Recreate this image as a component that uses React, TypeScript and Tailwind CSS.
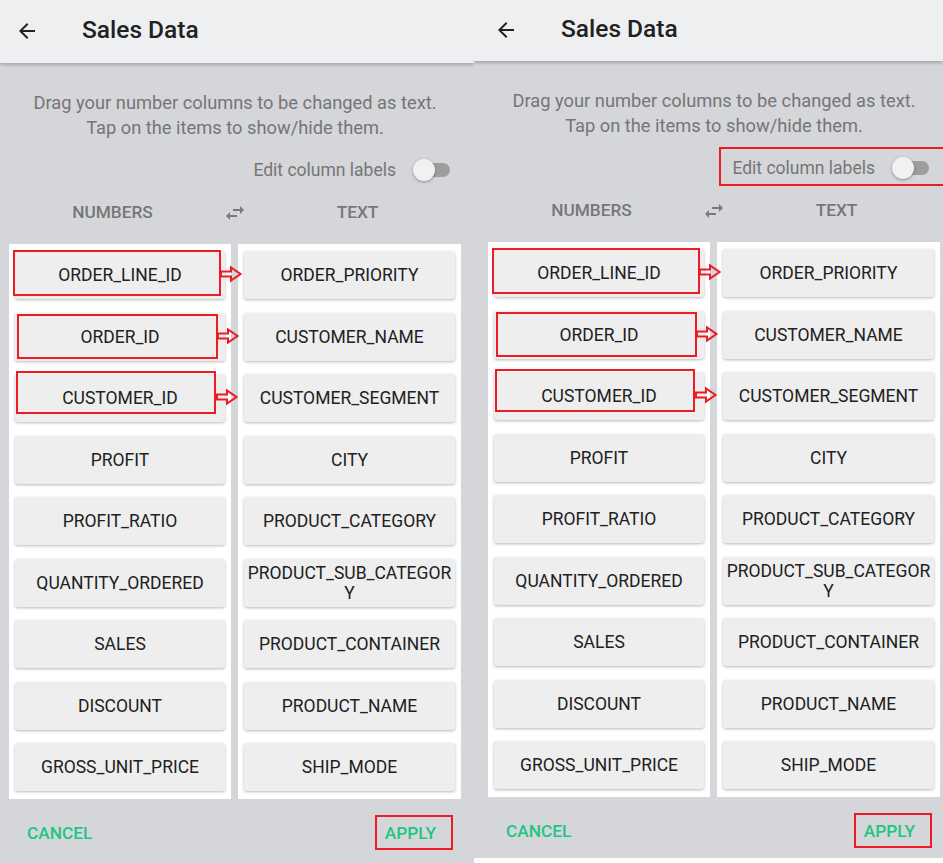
import React from 'react';

const numberCols = [
  'ORDER_LINE_ID',
  'ORDER_ID',
  'CUSTOMER_ID',
  'PROFIT',
  'PROFIT_RATIO',
  'QUANTITY_ORDERED',
  'SALES',
  'DISCOUNT',
  'GROSS_UNIT_PRICE',
];

const textCols = [
  'ORDER_PRIORITY',
  'CUSTOMER_NAME',
  'CUSTOMER_SEGMENT',
  'CITY',
  'PRODUCT_CATEGORY',
  'PRODUCT_SUB_CATEGORY',
  'PRODUCT_CONTAINER',
  'PRODUCT_NAME',
  'SHIP_MODE',
];

function BackArrow() {
  return (
    <svg width="24" height="24" viewBox="0 0 24 24" className="fill-[#212121]">
      <path d="M20 11H7.83l5.59-5.59L12 4l-8 8 8 8 1.41-1.41L7.83 13H20v-2z" />
    </svg>
  );
}

function SwapIcon() {
  return (
    <svg width="24" height="24" viewBox="0 0 24 24" className="fill-[#7a7a7a]">
      <path d="M6.99 11L3 15l3.99 4v-3H14v-2H6.99v-3zM21 9l-3.99-4v3H10v2h7.01v3L21 9z" />
    </svg>
  );
}

// hollow red arrow used for the annotations
function RedArrow() {
  return (
    <svg width="22" height="16" viewBox="0 0 22 16" className="overflow-visible">
      <path
        d="M1 5.5 H11 V1.5 L20.5 8 L11 14.5 V10.5 H1 Z"
        fill="none"
        stroke="#ec1c24"
        strokeWidth="2"
      />
    </svg>
  );
}

function ColButton({ label }: { label: string }) {
  return (
    <div className="h-[48px] flex items-center justify-center rounded-[3px] bg-[#eeeeee] px-[3px] text-center text-[17.5px] leading-[20px] text-[#212121] break-all shadow-[0_1px_3px_rgba(0,0,0,0.28)]">
      {label}
    </div>
  );
}

function Screen({ right }: { right?: boolean }) {
  return (
    <div className="flex flex-col h-full">
      <div
        className={`${right ? 'h-[61px] pl-[5px]' : 'h-[63px]'} shrink-0 bg-[#eeeff1] shadow-[0_2px_3px_rgba(0,0,0,0.22)] relative z-10`}
      >
        <div className="flex items-center h-full pb-[2px]">
          <div className="w-[54px] flex justify-center">
            <BackArrow />
          </div>
          <div className="ml-[28px] text-[24.5px] font-medium text-[#212121]">Sales Data</div>
        </div>
      </div>

      <div className={`flex-1 bg-[#d5d6da] ${right ? 'pl-[5px]' : ''}`}>
        <div className="relative w-[470px]">
          <div className="pt-[27px] text-center text-[18.3px] leading-[25px] text-[#757575]">
            <div>Drag your number columns to be changed as text.</div>
            <div>Tap on the items to show/hide them.</div>
          </div>

          <div className="mt-[16px] h-[28px] flex items-center justify-end pr-[20px]">
            <span className="text-[17.5px] text-[#757575]">Edit column labels</span>
            <div className="relative ml-[14px] w-[40px] h-[22px] flex items-center">
              <div className="ml-[4px] w-[36px] h-[14px] rounded-full bg-[#9e9e9e]" />
              <div className="absolute left-[3px] top-0 w-[22px] h-[22px] rounded-full bg-[#f1f1f1] shadow-[0_1px_3px_rgba(0,0,0,0.35)]" />
            </div>
          </div>

          <div className="mt-[17px] h-[24px] flex items-center px-[10px] text-[17.3px] font-medium text-[#777777]">
            <div className="flex-1 text-center">NUMBERS</div>
            <div className="w-[40px] flex justify-center">
              <SwapIcon />
            </div>
            <div className="flex-1 text-center">TEXT</div>
          </div>

          <div className="mt-[19px] px-[9px] grid grid-cols-[222px_223px] gap-[7px]">
            <div className="bg-white px-[6px] pt-[7px] pb-[8px] flex flex-col gap-[13.5px]">
              {numberCols.map(c => (
                <ColButton key={c} label={c} />
              ))}
            </div>
            <div className="bg-white px-[6px] pt-[7px] pb-[8px] flex flex-col gap-[13.5px]">
              {textCols.map(c => (
                <ColButton key={c} label={c} />
              ))}
            </div>
          </div>

          <div className="h-[70px] flex items-center justify-between pl-[27px] pr-[34px] pb-[1px] text-[17.3px] font-medium text-[#1fc583]">
            <span>CANCEL</span>
            <span>APPLY</span>
          </div>

          {/* red annotations */}
          <div className="absolute left-[13px] top-[187px] w-[208px] h-[46px] border-2 border-[#ec1c24]" />
          <div className="absolute left-[220px] top-[203px]">
            <RedArrow />
          </div>
          <div className="absolute left-[17px] top-[251px] w-[201px] h-[45px] border-2 border-[#ec1c24]" />
          <div className="absolute left-[217px] top-[265px]">
            <RedArrow />
          </div>
          <div className="absolute left-[16px] top-[308px] w-[200px] h-[43px] border-2 border-[#ec1c24]" />
          <div className="absolute left-[216px] top-[326px]">
            <RedArrow />
          </div>
          <div className="absolute left-[375px] top-[752px] w-[78px] h-[35px] border-2 border-[#ec1c24]" />
          {right && (
            <div className="absolute left-[240px] top-[86px] w-[240px] h-[39px] border-2 border-[#ec1c24]" />
          )}
        </div>
      </div>
    </div>
  );
}

export default function App() {
  return (
    <div className="w-[943px] h-[863px] bg-white flex items-start font-['Roboto','Liberation_Sans',sans-serif]">
      <div className="w-[474px] h-[863px] overflow-hidden">
        <Screen />
      </div>
      <div className="w-[469px] h-[858px] overflow-hidden">
        <Screen right />
      </div>
    </div>
  );
}
